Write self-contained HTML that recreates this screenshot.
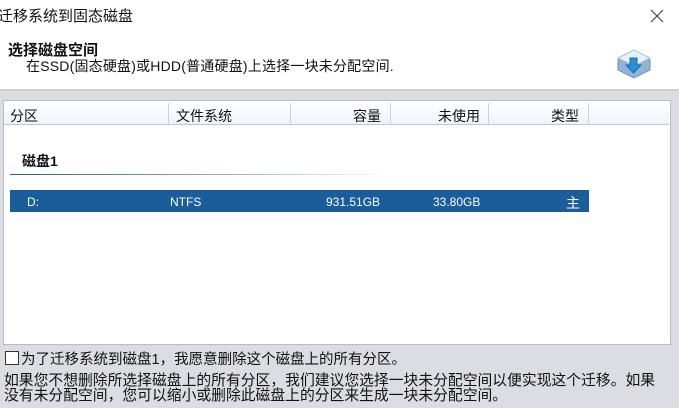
<!DOCTYPE html><html><head><meta charset="utf-8"><style>
body{margin:0;width:679px;height:408px;overflow:hidden;background:#dcdde3;font-family:"Liberation Sans","Noto Sans CJK SC",sans-serif;color:#111;position:relative}
.a{position:absolute;white-space:nowrap}
</style></head><body>
<div class="a" style="left:0;top:0;width:679px;height:89px;background:#fff"></div>
<div class="a" style="left:0;top:89px;width:679px;height:2px;background:#cfd0d6"></div>
<div class="a" style="left:-2px;top:5px;font-size:15px">迁移系统到固态磁盘</div>
<svg class="a" style="left:650px;top:9px" width="14" height="14" viewBox="0 0 14 14"><path d="M1 1L13 13M13 1L1 13" stroke="#444" stroke-width="1.2"/></svg>
<div class="a" style="left:8px;top:39px;font-size:15px;font-weight:bold">选择磁盘空间</div>
<div class="a" style="left:26px;top:56px;font-size:14px;letter-spacing:0.2px">在SSD(固态硬盘)或HDD(普通硬盘)上选择一块未分配空间.</div>
<svg class="a" style="left:615px;top:46px" width="38" height="36" viewBox="0 0 38 36">
<path d="M3 14 L19 6 L35 14 L35 24 L19 32 L3 24 Z" fill="#8fb4d6" stroke="#6a93bd"/>
<path d="M3 12 L19 4 L35 12 L19 20 Z" fill="#e9f1f8" stroke="#a7bfd6"/>
<path d="M15 12 h7 v7 h4 l-7.5 8 l-7.5 -8 h4z" fill="#2a8fd8" stroke="#1b6aa8"/>
</svg>
<div class="a" style="left:3px;top:100px;width:666px;height:243px;background:#fff;border:1px solid #b9bcc4"></div>
<div class="a" style="left:4px;top:102px;width:665px;height:22px;background:linear-gradient(#fff,#eef4fb);border-bottom:1px solid #b8c8da"></div>
<div class="a" style="left:168px;top:103px;width:1px;height:21px;background:#c9d3df"></div>
<div class="a" style="left:290px;top:103px;width:1px;height:21px;background:#c9d3df"></div>
<div class="a" style="left:390px;top:103px;width:1px;height:21px;background:#c9d3df"></div>
<div class="a" style="left:488px;top:103px;width:1px;height:21px;background:#c9d3df"></div>
<div class="a" style="left:588px;top:103px;width:1px;height:21px;background:#c9d3df"></div>
<div class="a" style="left:10px;top:106px;font-size:14px">分区</div>
<div class="a" style="left:176px;top:106px;font-size:14px">文件系统</div>
<div class="a" style="left:353px;top:106px;font-size:14px">容量</div>
<div class="a" style="left:438px;top:106px;font-size:14px">未使用</div>
<div class="a" style="left:551px;top:106px;font-size:14px">类型</div>
<div class="a" style="left:22px;top:151px;font-size:14px;font-weight:bold">磁盘1</div>
<div class="a" style="left:10px;top:174px;width:380px;height:1px;background:linear-gradient(90deg,#2d5a8a,#9ab4cf 60%,#fff)"></div>
<div class="a" style="left:10px;top:190px;width:579px;height:22px;background:#1b5c9b"></div>
<div class="a" style="left:27px;top:195px;font-size:12px;color:#fff">D:</div>
<div class="a" style="left:170px;top:195px;font-size:12px;color:#fff">NTFS</div>
<div class="a" style="left:326px;top:195px;font-size:12px;color:#fff">931.51GB</div>
<div class="a" style="left:433px;top:195px;font-size:12px;color:#fff">33.80GB</div>
<div class="a" style="left:566px;top:193px;font-size:14px;color:#fff">主</div>
<div class="a" style="left:5px;top:351px;width:12px;height:12px;border:1px solid #333;background:#fff"></div>
<div class="a" style="left:21px;top:348px;font-size:14.5px">为了迁移系统到磁盘1，我愿意删除这个磁盘上的所有分区。</div>
<div class="a" style="left:4px;top:374px;font-size:14.8px;line-height:15px">如果您不想删除所选择磁盘上的所有分区，我们建议您选择一块未分配空间以便实现这个迁移。如果<br>没有未分配空间，您可以缩小或删除此磁盘上的分区来生成一块未分配空间。</div>
</body></html>
